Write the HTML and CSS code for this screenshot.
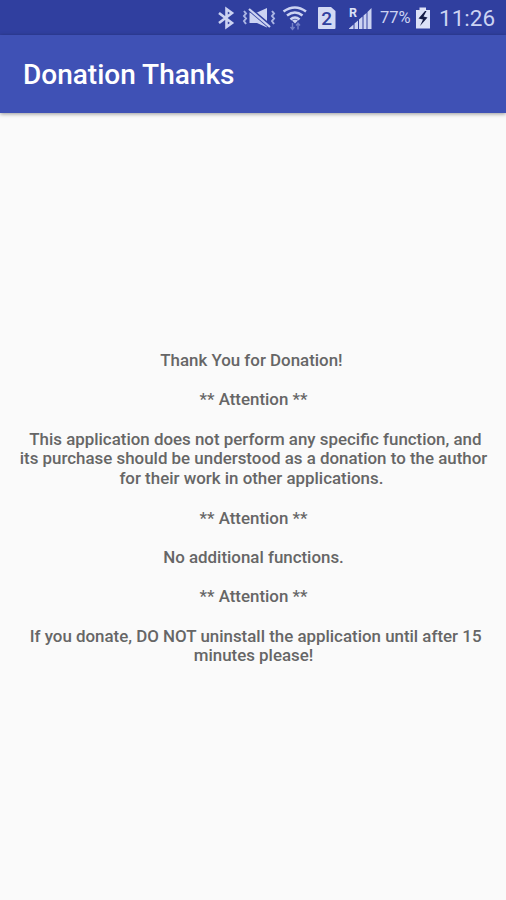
FILE: index.html
```html
<!DOCTYPE html>
<html lang="en">
<head>
    <meta charset="UTF-8">
    <meta name="viewport" content="width=device-width, initial-scale=1.0">
    <title>Donation Thanks</title>
    <link rel="stylesheet" href="styles.css">
</head>
<body>

    <div class="status-bar">
        <!-- Bluetooth -->
        <svg class="icon bluetooth" width="18" height="24" viewBox="0 0 18 24">
            <path d="M2 7 L15 17 L9.5 21 V3 L15 7 L2 17" fill="none" stroke="#ccd3f2" stroke-width="2.6"/>
        </svg>
        <!-- Vibrate, sound off -->
        <svg class="icon mute" width="34" height="22" viewBox="0 0 34 22">
            <path d="M7.5 5.5 H15 L25 1 V20.5 L15 16 H7.5 Z" fill="#ccd3f2"/>
            <path d="M7 1.5 L28 19.5" stroke="#303f9f" stroke-width="4.4"/>
            <path d="M7 2 L28 20" stroke="#ccd3f2" stroke-width="2.3"/>
            <path d="M2 4 L4 6.5 L2 9 L4 11.5 L2 14 L4 17 M30 4 L32 6.5 L30 9 L32 11.5 L30 14 L32 17" fill="none" stroke="#aab4e3" stroke-width="2"/>
        </svg>
        <!-- Wifi -->
        <svg class="icon wifi" width="26" height="26" viewBox="0 0 26 26">
            <path d="M1.5 6.5 Q13 -1.5 24 6.5 M5 10.5 Q13 4.5 20.5 10.5 M8.5 14.5 Q13 10.5 17.5 14.5" fill="none" stroke="#ccd3f2" stroke-width="2.6"/>
            <path d="M10 15.5 Q13 13.5 16 15.5 L13 18.5 Z" fill="#ccd3f2"/>
            <path d="M10.5 18 V24 M8.5 22 L10.5 24.5 L12.5 22 M16 24.5 V18.5 M14 20.5 L16 18 L18 20.5" fill="none" stroke="#7481c8" stroke-width="1.4"/>
        </svg>
        <!-- SIM card 2 -->
        <svg class="icon sim" width="20" height="24" viewBox="0 0 20 24">
            <path d="M1.5 1 H14 L18.5 5 V22 Q18.5 23 17.5 23 H2 Q1 23 1 22 V1.5 Z" fill="#d3d9f4"/>
            <text x="9.7" y="18.7" class="sim-number">2</text>
        </svg>
        <!-- Roaming signal -->
        <svg class="icon signal" width="26" height="26" viewBox="0 0 26 26">
            <path d="M1 23.5 L5.5 19.5 V24 H1 Z M6.5 18.5 L10 15.5 V24 H6.5 Z M11 14.5 L14.5 11.5 V24 H11 Z M15.5 10.5 L18.5 8 V24 H15.5 Z M19.5 7 L23.5 3 V24 H19.5 Z" fill="#ccd3f2"/>
            <text x="1" y="11.5" class="roaming">R</text>
        </svg>
        <span class="percent">77%</span>
        <!-- Charging battery -->
        <svg class="icon battery" width="16" height="24" viewBox="0 0 16 24">
            <path d="M4.5 1.5 H11 V4 H15 V22.5 H1 V4 H4.5 Z" fill="#dde2f7"/>
            <path d="M10 5 L3.5 12.5 L8 13.5 L5 20 L12.5 11.5 L8.5 10.5 L11.5 5 Z" fill="#151c45"/>
        </svg>
        <span class="clock">11:26</span>
    </div>

    <div class="toolbar">
        <h1>Donation Thanks</h1>
    </div>

    <div class="content">
        <p class="message">Thank You for Donation! 

** Attention **

 This application does not perform any specific function, and
its purchase should be understood as a donation to the author
for their work in other applications. 

** Attention **

No additional functions.

** Attention **

 If you donate, DO NOT uninstall the application until after 15
minutes please!</p>
    </div>

</body>
</html>
```

FILE: styles.css
```css
* {
    margin: 0;
    padding: 0;
    box-sizing: border-box;
}

body {
    display: flex;
    flex-direction: column;
    height: 100vh;
    font-family: Roboto, "Liberation Sans", sans-serif;
    background-color: #fafafa;
    overflow: hidden;
}

/* Status bar */
.status-bar {
    display: flex;
    flex: none;
    align-items: center;
    height: 35px;
    padding-left: 217px;
    background-color: #303f9f;
    color: #ccd3f2;
}

.icon {
    display: block;
    flex: none;
}

.mute {
    margin-left: 7px;
}

.wifi {
    margin-left: 6px;
}

.sim {
    margin-left: 9px;
}

.signal {
    margin-left: 11px;
}

.sim-number {
    font-size: 19px;
    font-weight: 500;
    text-anchor: middle;
    fill: #303f9f;
}

.roaming {
    font-size: 12.5px;
    font-weight: 700;
    fill: #dde2f7;
}

.percent {
    width: 35px;
    margin-left: 6px;
    font-size: 16.5px;
}

.battery {
    margin-left: 0;
}

.clock {
    margin-left: 8px;
    font-size: 22.5px;
}

/* Toolbar */
.toolbar {
    display: flex;
    flex: none;
    align-items: center;
    height: 78px;
    padding-left: 23px;
    background-color: #3f51b5;
    box-shadow: 0 1px 4px rgba(0, 0, 0, 0.4);
}

h1 {
    font-size: 28px;
    font-weight: 500;
    color: #ffffff;
}

/* Message */
.content {
    display: flex;
    flex: 1;
    align-items: center;
    justify-content: center;
    padding-top: 4px;
    padding-left: 1px;
}

.message {
    font-size: 16.9px;
    font-weight: 500;
    line-height: 19.7px;
    text-align: center;
    white-space: pre;
    color: #666666;
}
```
